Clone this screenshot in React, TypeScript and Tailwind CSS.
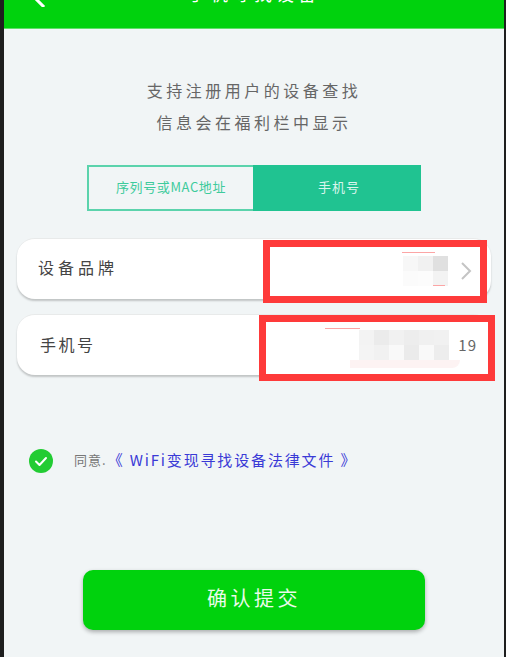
import React from 'react';

const cjk = 'font-["Noto_Sans_CJK_SC","Liberation_Sans",sans-serif]';

// pixelated censor patch, cell shades read from the screenshot
const Mosaic = ({ cells, cols }: { cells: string[]; cols: string }) => (
  <div className={`grid ${cols}`}>
    {cells.map((c, i) => (
      <div key={i} className="h-[15px]" style={{ backgroundColor: c }} />
    ))}
  </div>
);

export default function App() {
  return (
    <div className={`h-[657px] w-[506px] overflow-hidden bg-[#1e1e1e] pl-1 pr-[2px] ${cjk}`}>
      <div className="flex h-full flex-col bg-[#f1f5f6]">
        <header className="relative flex h-[29px] shrink-0 items-end justify-center overflow-hidden border-b border-[#5fe067] bg-[#00d20d]">
          <svg className="absolute left-[21px] top-[-13px] h-[20px] w-[24px]" viewBox="0 0 24 20" fill="none" stroke="white" strokeWidth="3" strokeLinecap="square">
            <path d="M18 1 L9 10 L18 19" />
          </svg>
          <span className="mb-[23px] text-[18px] leading-[24px] tracking-[4px] text-white">手机寻找设备</span>
        </header>

        <p className="mt-[45px] text-center text-[16px] leading-[32px] tracking-[3.5px] text-[#666]">
          支持注册用户的设备查找
          <br />
          信息会在福利栏中显示
        </p>

        <div className="ml-[83px] mt-[27px] flex h-[46px] w-[334px] text-[13px]">
          <div className="flex w-[166px] items-center justify-center border-2 border-r-0 border-[#5bd3ac] pb-[2px] tracking-[0.6px] text-[#3ecb9c]">序列号或MAC地址</div>
          <div className="flex flex-1 items-center justify-center bg-[#20c391] pb-[2px] pl-[4px] tracking-[1px] text-[#d8f5ec]">手机号</div>
        </div>

        <div className="relative ml-[13px] mt-[27px] flex h-[61px] w-[474px] items-center rounded-[18px] border-t border-[#e8eaea] bg-white pb-[4px] pl-[21px] text-[16px] tracking-[4px] text-[#444] shadow-[0_2px_2px_rgba(0,0,0,0.2)]">
          设备品牌
          {/* red annotation box */}
          <div className="absolute left-[246px] top-[1px] flex h-[63px] w-[224px] items-center justify-end border-[7px] border-[#fe3a3a] bg-white pb-[2px] pr-[8px]">
            <div className="absolute left-[132px] top-[5px] h-[1px] w-[33px] bg-[#fca5a5]" />
            <div className="absolute left-[163px] top-[38px] h-[1px] w-[12px] bg-[#fca5a5]" />
            <Mosaic cols="grid-cols-3 w-[45px] mr-[12px]" cells={['#f7f7f7', '#f1f1f1', '#e0e0e0', '#fbfbfb', '#fcfcfc', '#f3f3f3']} />
            <svg className="h-[18px] w-[12px]" viewBox="0 0 12 18" fill="none" stroke="#c4c4c4" strokeWidth="2">
              <path d="M2 1 L10 9 L2 17" />
            </svg>
          </div>
        </div>

        <div className="relative ml-[13px] mt-[15px] flex h-[61px] w-[474px] items-center rounded-[18px] border-t border-[#e8eaea] bg-white pb-[2px] pl-[23px] text-[16px] tracking-[2.5px] text-[#444] shadow-[0_2px_2px_rgba(0,0,0,0.2)]">
          手机号
          <div className="absolute left-[242px] top-0 flex h-[66px] w-[236px] items-center justify-end border-[7px] border-[#fe3a3a] bg-white pb-[6px] pr-[11px] text-[15px] tracking-[1px] text-[#666]">
            <div className="absolute left-[59px] top-[6px] h-[1px] w-[35px] bg-[#fca5a5]" />
            <div className="absolute left-[84px] top-[38px] h-[8px] w-[110px] rounded-br-[10px] bg-[#fdf3f3]" />
            <Mosaic cols="grid-cols-6 w-[90px] mr-[9px]" cells={['#f3f3f3', '#ebebeb', '#f1f1f1', '#ededed', '#f0f0f0', '#f1f1f1', '#f4f4f4', '#f1f1f1', '#f9f9f9', '#ebebeb', '#f9f9f9', '#ededed']} />
            19
          </div>
        </div>

        <div className="ml-[25px] mt-[74px] flex h-6 items-center">
          <span className="flex h-6 w-6 items-center justify-center rounded-full bg-[#22cc33]">
            <svg className="h-[14px] w-[14px]" viewBox="0 0 14 14" fill="none" stroke="white" strokeWidth="2" strokeLinecap="round" strokeLinejoin="round">
              <path d="M2 7.5 L5.5 11 L12 4" />
            </svg>
          </span>
          <span className="ml-[21px] pb-[2px] text-[13px] tracking-[1px] text-[#777]">同意.</span>
          <span className="ml-[1px] pb-[2px] text-[15px] tracking-[1.85px] text-[#3a3ad6]">《 WiFi变现寻找设备法律文件 》</span>
        </div>

        <button className="ml-[79px] mt-[97px] h-[60px] w-[342px] rounded-[10px] bg-[#00d20d] pb-[5px] text-[20px] tracking-[3.5px] text-[#eafbe9] shadow-[0_2px_4px_rgba(0,0,0,0.3)]">
          确认提交
        </button>
      </div>
    </div>
  );
}
